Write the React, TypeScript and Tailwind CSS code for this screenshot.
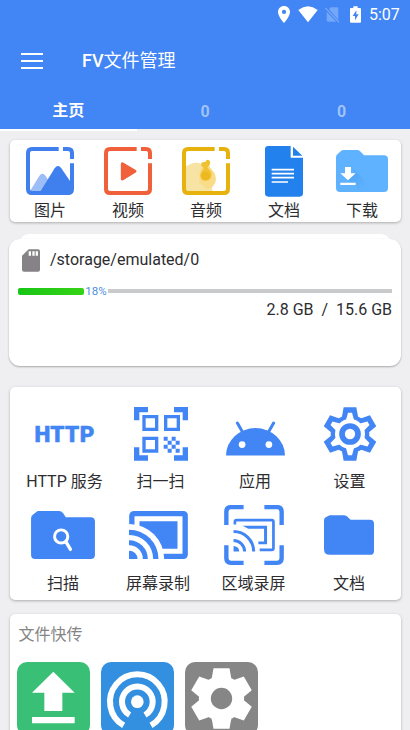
import type { ReactNode } from "react";

const BLUE = "#4285f4";
const SIXTHS = [0, 60, 120, 180, 240, 300];

function PinIcon() {
  return (
    <svg width="12" height="17" viewBox="5 2 14 20" preserveAspectRatio="none" fill="#fff">
      <path d="M12 2C8.13 2 5 5.13 5 9c0 5.25 7 13 7 13s7-7.75 7-13c0-3.87-3.13-7-7-7zm0 9.5a2.5 2.5 0 1 1 0-5 2.5 2.5 0 0 1 0 5z" />
    </svg>
  );
}

function WifiIcon() {
  return (
    <svg width="20" height="17" viewBox="0 0 60 51" fill="#fff">
      <path d="M1 12Q30-10 59 12L30 49Z" />
    </svg>
  );
}

function NoSimIcon() {
  return (
    <svg width="15" height="17" viewBox="0 0 45 51">
      <path d="M17 4H37Q40 4 40 8V41L12 10Z" fill="#73a7f8" />
      <path d="M5 17L34 47H9Q5 47 5 43Z" fill="#73a7f8" />
      <path d="M1 6L42 49" stroke="#73a7f8" strokeWidth="4" />
    </svg>
  );
}

function BatteryIcon() {
  return (
    <svg width="11" height="17" viewBox="0 0 33 51">
      <path d="M10 1H23V6H30Q33 6 33 9V47Q33 50 30 50H3Q0 50 0 47V9Q0 6 3 6H10Z" fill="#fff" />
      <path d="M19 13L8 30H15V43L26 25H19Z" fill={BLUE} />
    </svg>
  );
}

function Frame({ color }: { color: string }) {
  return (
    <>
      <path
        d="M98 6H18Q6 6 6 18V126Q6 138 18 138H126Q138 138 138 126V49"
        fill="none"
        stroke={color}
        strokeWidth="12"
      />
      <path d="M111 6H126Q138 6 138 18V36" fill="none" stroke={color} strokeWidth="12" />
    </>
  );
}

function PictureIcon() {
  return (
    <svg width="48" height="48" viewBox="0 0 144 144">
      <path d="M12 132L40 87Q49 74 59 87L66 98L44 135H12Z" fill="#9dbdf8" />
      <path d="M42 135L86 64Q96 50 106 64L132 102V135Z" fill="#3f7fee" />
      <Frame color="#3f7fee" />
    </svg>
  );
}

function VideoIcon() {
  return (
    <svg width="48" height="48" viewBox="0 0 144 144">
      <Frame color="#f0603a" />
      <path d="M55 50L93 73L55 96Z" fill="#f0603a" stroke="#f0603a" strokeWidth="9" strokeLinejoin="round" />
    </svg>
  );
}

function AudioIcon() {
  return (
    <svg width="48" height="48" viewBox="0 0 144 144">
      <path d="M11 60Q26 47 45 47Q88 52 91 135H11Z" fill="#f7e3a3" />
      <path d="M75 43Q80 60 92 71Q104 83 101 102Q97 124 73 125L52 105Q48 60 75 43Z" fill="#f8dc87" />
      <path d="M57 52Q58 43 70 45Q72 37 79 38Q86 41 84 51Q83 57 76 61L88 76Q91 92 80 99Q66 105 58 96Q52 85 58 75L66 62Q57 59 57 52Z" fill="#f0c232" />
      <circle cx="71" cy="87" r="13" fill="#edb820" />
      <Frame color="#e7b20e" />
    </svg>
  );
}

function DocIcon() {
  return (
    <svg width="38" height="51" viewBox="0 0 114 153">
      <path d="M10 0H77V35H114V142Q114 152 104 152H10Q0 152 0 142V10Q0 0 10 0Z" fill="#2281ec" />
      <path d="M84 2L112 29H84Z" fill="#2281ec" />
      <path d="M20 71H87M20 83H87M20 95H87M20 108H69" stroke="#fff" strokeWidth="5" />
    </svg>
  );
}

function DownloadFolderIcon() {
  return (
    <svg width="52" height="42" viewBox="0 0 156 126">
      <defs>
        <linearGradient id="folderShade" x1="0" y1="0" x2="1" y2="1">
          <stop offset="0.3" stopColor="#4a9df0" stopOpacity="0.5" />
          <stop offset="0.8" stopColor="#4a9df0" stopOpacity="0" />
        </linearGradient>
      </defs>
      <path d="M14 4Q18 0 24 0H64Q70 0 74 5L84 16H144Q156 16 156 28V114Q156 126 144 126H12Q0 126 0 114V22Q0 15 5 12Z" fill="#5fb2ff" />
      <path d="M45 50L106 111V126H70L58 105L36 91L59 70Z" fill="url(#folderShade)" />
      <path d="M27 51H45V70H59L36 91L13 70H27ZM13 98H59V105H13Z" fill="#fff" />
    </svg>
  );
}

function SdCardIcon() {
  return (
    <svg width="18" height="23" viewBox="0 0 54 68">
      <path d="M20 0H48Q54 0 54 6V62Q54 68 48 68H6Q0 68 0 62V20Z" fill="#858385" />
      <path d="M20 6H27V20H20ZM31 6H38V20H31ZM41 6H48V20H41Z" fill="#fff" />
    </svg>
  );
}

function HttpIcon() {
  return (
    <svg width="66" height="28" viewBox="-3 -4 66 28">
      <text
        x="-0.6"
        y="18"
        textLength="60"
        lengthAdjust="spacing"
        className="font-['Roboto'] text-[22.5px] font-black"
        fill={BLUE}
        stroke={BLUE}
        strokeWidth="0.5"
      >
        HTTP
      </text>
    </svg>
  );
}

function QrIcon() {
  return (
    <svg width="54" height="54" viewBox="0 0 162 162" fill={BLUE}>
      <path d="M0 0H42V16H16V40H0ZM120 0H162V40H146V16H120ZM0 121H16V145H42V161H0ZM146 121H162V161H120V145H146Z" />
      <path d="M30 29H68V67H30ZM95 29H133V67H95ZM30 94H68V132H30Z" fill="none" stroke={BLUE} strokeWidth="10" />
      <path d="M89 89h12v12h-12zM113 89h12v12h-12zM101 101h12v12h-12zM125 101h12v12h-12zM89 113h12v12h-12zM113 113h12v12h-12zM101 125h12v12h-12zM125 125h12v12h-12z" />
    </svg>
  );
}

function AndroidIcon() {
  return (
    <svg width="59" height="35" viewBox="0 0 176 104">
      <path d="M34 6L50 34M142 6L126 34" stroke={BLUE} strokeWidth="9" strokeLinecap="round" />
      <path d="M0 103A88 82 0 0 1 176 103Z" fill={BLUE} />
      <circle cx="48" cy="70" r="10" fill="#fff" />
      <circle cx="128" cy="70" r="10" fill="#fff" />
    </svg>
  );
}

function GearOutlineIcon() {
  return (
    <svg width="54" height="54" viewBox="-81 -81 162 162">
      {SIXTHS.map((a) => (
        <path key={a} d="M-19-80H19L24-53L0 0L-24-53Z" fill={BLUE} transform={`rotate(${a})`} />
      ))}
      <circle r="58" fill={BLUE} />
      <circle r="45" fill="#fff" />
      {SIXTHS.map((a) => (
        <path key={a} d="M-6-64H6L12-42H-12Z" fill="#fff" transform={`rotate(${a})`} />
      ))}
      <circle r="24" fill="none" stroke={BLUE} strokeWidth="17" />
    </svg>
  );
}

function ScanFolderIcon() {
  return (
    <svg width="64" height="48" viewBox="0 0 193 145">
      <path d="M20 0H84Q92 0 97 7L105 19H180Q193 19 193 32V132Q193 145 180 145H13Q0 145 0 132V22Q0 14 7 10Z" fill={BLUE} />
      <circle cx="91" cy="77" r="20" fill="none" stroke="#fff" strokeWidth="9" />
      <path d="M106 94L119 116" stroke="#fff" strokeWidth="10" strokeLinecap="round" />
    </svg>
  );
}

function CastIcon() {
  return (
    <svg width="59" height="48" viewBox="0 0 176 144">
      <path d="M16 0H162Q176 0 176 14V130Q176 144 162 144H0V16Q0 0 16 0Z" fill={BLUE} />
      <path d="M23.5 23.5H152.5V120.5H23.5Z" fill="none" stroke="#fff" strokeWidth="15" />
      <circle cx="0" cy="144" r="105" fill="#fff" />
      <circle cx="0" cy="144" r="88" fill={BLUE} />
      <circle cx="0" cy="144" r="72" fill="#fff" />
      <circle cx="0" cy="144" r="56" fill={BLUE} />
      <circle cx="0" cy="144" r="41" fill="#fff" />
      <circle cx="0" cy="144" r="25" fill={BLUE} />
    </svg>
  );
}

function RegionCastIcon() {
  return (
    <svg width="60" height="60" viewBox="0 0 178 179" fill="none" stroke={BLUE}>
      <path
        d="M6.5 60V20Q6.5 6.5 20 6.5H58M120 6.5H158Q171.5 6.5 171.5 20V60M171.5 120V159Q171.5 172.5 158 172.5H120M58 172.5H20Q6.5 172.5 6.5 159V120"
        strokeWidth="13"
      />
      <path d="M32 58V50Q32 45 37 45H142Q147 45 147 50V129Q147 134 142 134H106" strokeWidth="8" />
      <path d="M55 62H128V117H102V109H119V71H72Z" fill={BLUE} stroke="none" />
      <path d="M28 106A33 33 0 0 1 61 139M28 79A60 60 0 0 1 88 139" strokeWidth="9" />
      <path d="M28 122A17 17 0 0 1 45 139H28Z" fill={BLUE} stroke="none" />
    </svg>
  );
}

function FolderIcon() {
  return (
    <svg width="50" height="40" viewBox="0 0 151 120">
      <path d="M17 0H61Q67 0 71 5L80 14H139Q151 14 151 26V108Q151 120 139 120H18Q0 120 0 102V18Q0 8 7 6Z" fill={BLUE} />
    </svg>
  );
}

function UploadTile() {
  return (
    <svg width="73" height="73" viewBox="0 0 219 219" fill="#fff">
      <rect width="219" height="219" rx="30" fill="#3ac076" />
      <path d="M109 29L173 92H136V147H82V92H45ZM45 165H173V184H45Z" />
    </svg>
  );
}

function HotspotTile() {
  return (
    <svg width="73" height="73" viewBox="0 0 219 219">
      <rect width="219" height="219" rx="30" fill="#338fdf" />
      <g fill="none" stroke="#fff" strokeWidth="18">
        <path d="M68 190A82 82 0 1 1 150 190" />
        <path d="M86 159A46 46 0 1 1 132 159" />
      </g>
      <circle cx="109" cy="119" r="19" fill="#fff" />
    </svg>
  );
}

function SettingsTile() {
  return (
    <svg width="73" height="73" viewBox="-109.5 -109.5 219 219">
      <rect x="-109.5" y="-109.5" width="219" height="219" rx="30" fill="#868686" />
      {SIXTHS.map((a) => (
        <path key={a} d="M-24-91H24L29-62L0 0L-29-62Z" fill="#fff" transform={`rotate(${a})`} />
      ))}
      <circle r="68" fill="#fff" />
      <circle r="32" fill="#868686" />
    </svg>
  );
}

function Item({ icon, label, box }: { icon: ReactNode; label: string; box: string }) {
  return (
    <div className="flex flex-col items-center">
      <div className={`flex items-center justify-center ${box}`}>{icon}</div>
      <div className="h-6 pt-px text-base leading-6 whitespace-nowrap">{label}</div>
    </div>
  );
}

const card = "mx-[9.5px] bg-white rounded-[5px] shadow-[0_1px_3px_rgba(0,0,0,0.28)]";

export default function App() {
  return (
    <div className="flex h-[730px] w-[410px] flex-col overflow-hidden bg-[#efeef0] font-['Roboto','Noto_Sans_CJK_SC',sans-serif] text-[#2d2d2f]">
      <header className="flex h-[129px] shrink-0 flex-col bg-[#4285f4] text-white">
        <div className="flex h-[29px] items-center justify-end pr-[10px]">
          <PinIcon />
          <div className="ml-[8px]"><WifiIcon /></div>
          <div className="ml-[7px]"><NoSimIcon /></div>
          <div className="ml-[10px]"><BatteryIcon /></div>
          <span className="ml-[8px] w-[31px] pt-px text-base leading-6">5:07</span>
        </div>
        <div className="flex h-[63px] items-center pl-[21px]">
          <div className="flex w-[22px] flex-col gap-[5px]">
            <span className="h-[2px] bg-white" />
            <span className="h-[2px] bg-white" />
            <span className="h-[2px] bg-white" />
          </div>
          <h1 className="ml-[39px] text-lg">
            <span className="font-medium">FV</span>文件管理
          </h1>
        </div>
        <div className="grid h-[37px] grid-cols-3 text-center text-base font-bold">
          <div className="border-b-[2.5px] border-white leading-[37px]">主页</div>
          <div className="leading-[39px] text-[#9fc2fa]">0</div>
          <div className="leading-[39px] text-[#9fc2fa]">0</div>
        </div>
      </header>

      <section className={`${card} mt-[11px] h-[82px] shrink-0`}>
        <div className="ml-[1.5px] grid grid-cols-[repeat(5,78px)]">
          <Item box="h-[58px] pt-[4px]" icon={<PictureIcon />} label="图片" />
          <Item box="h-[58px] pt-[4px]" icon={<VideoIcon />} label="视频" />
          <Item box="h-[58px] pt-[4px]" icon={<AudioIcon />} label="音频" />
          <Item box="h-[58px] pt-[4px]" icon={<DocIcon />} label="文档" />
          <Item box="h-[58px] pt-[4px]" icon={<DownloadFolderIcon />} label="下载" />
        </div>
      </section>

      <section className="mx-[9px] mt-[12px] flex h-[132px] shrink-0 flex-col">
        <div className="mx-[10px] -mb-[5px] h-[10px] shrink-0 rounded-t-[10px] bg-white" />
        <div className="flex-1 rounded-[11px] bg-white px-[9px] shadow-[0_1px_2px_rgba(0,0,0,0.3)]">
          <div className="flex h-[43px] items-center pl-[4px]">
            <SdCardIcon />
            <span className="ml-[10px] pb-[2px] text-base leading-5">/storage/emulated/0</span>
          </div>
          <div className="flex h-[18px] items-center">
            <div className="h-[7px] w-[66px] rounded-[2px] bg-gradient-to-r from-[#16c516] to-[#35d316]" />
            <span className="w-[24px] text-center text-[11.5px] leading-4 text-[#4a90e2]">18%</span>
            <div className="h-[4px] flex-1 bg-[#c9cacc]" />
          </div>
          <div className="pt-px text-right text-base leading-[18px] whitespace-pre">2.8 GB  /  15.6 GB</div>
        </div>
      </section>

      <section className={`${card} mt-[21px] h-[213px] shrink-0`}>
        <div className="ml-[6.5px] grid grid-cols-[97px_95px_94px_95px]">
          <Item box="h-[82px] pt-[11px]" icon={<HttpIcon />} label="HTTP 服务" />
          <Item box="h-[82px] pt-[11px]" icon={<QrIcon />} label="扫一扫" />
          <Item box="h-[82px] pt-[20px]" icon={<AndroidIcon />} label="应用" />
          <Item box="h-[82px] pt-[11px]" icon={<GearOutlineIcon />} label="设置" />
        </div>
        <div className="ml-[6px] grid grid-cols-[95px_95px_96px_95px]">
          <Item box="h-[78px] pt-[6px]" icon={<ScanFolderIcon />} label="扫描" />
          <Item box="h-[78px] pt-[6px]" icon={<CastIcon />} label="屏幕录制" />
          <Item box="h-[78px] pt-[6px]" icon={<RegionCastIcon />} label="区域录屏" />
          <Item box="h-[78px] pt-[6px]" icon={<FolderIcon />} label="文档" />
        </div>
      </section>

      <section className={`${card} mt-[14px] h-[160px] shrink-0`}>
        <h2 className="h-[47.5px] pt-[9px] pl-[9px] text-base leading-6 text-[#858585]">文件快传</h2>
        <div className="flex gap-[11px] pl-[7.2px]">
          <UploadTile />
          <HotspotTile />
          <SettingsTile />
        </div>
      </section>
    </div>
  );
}
